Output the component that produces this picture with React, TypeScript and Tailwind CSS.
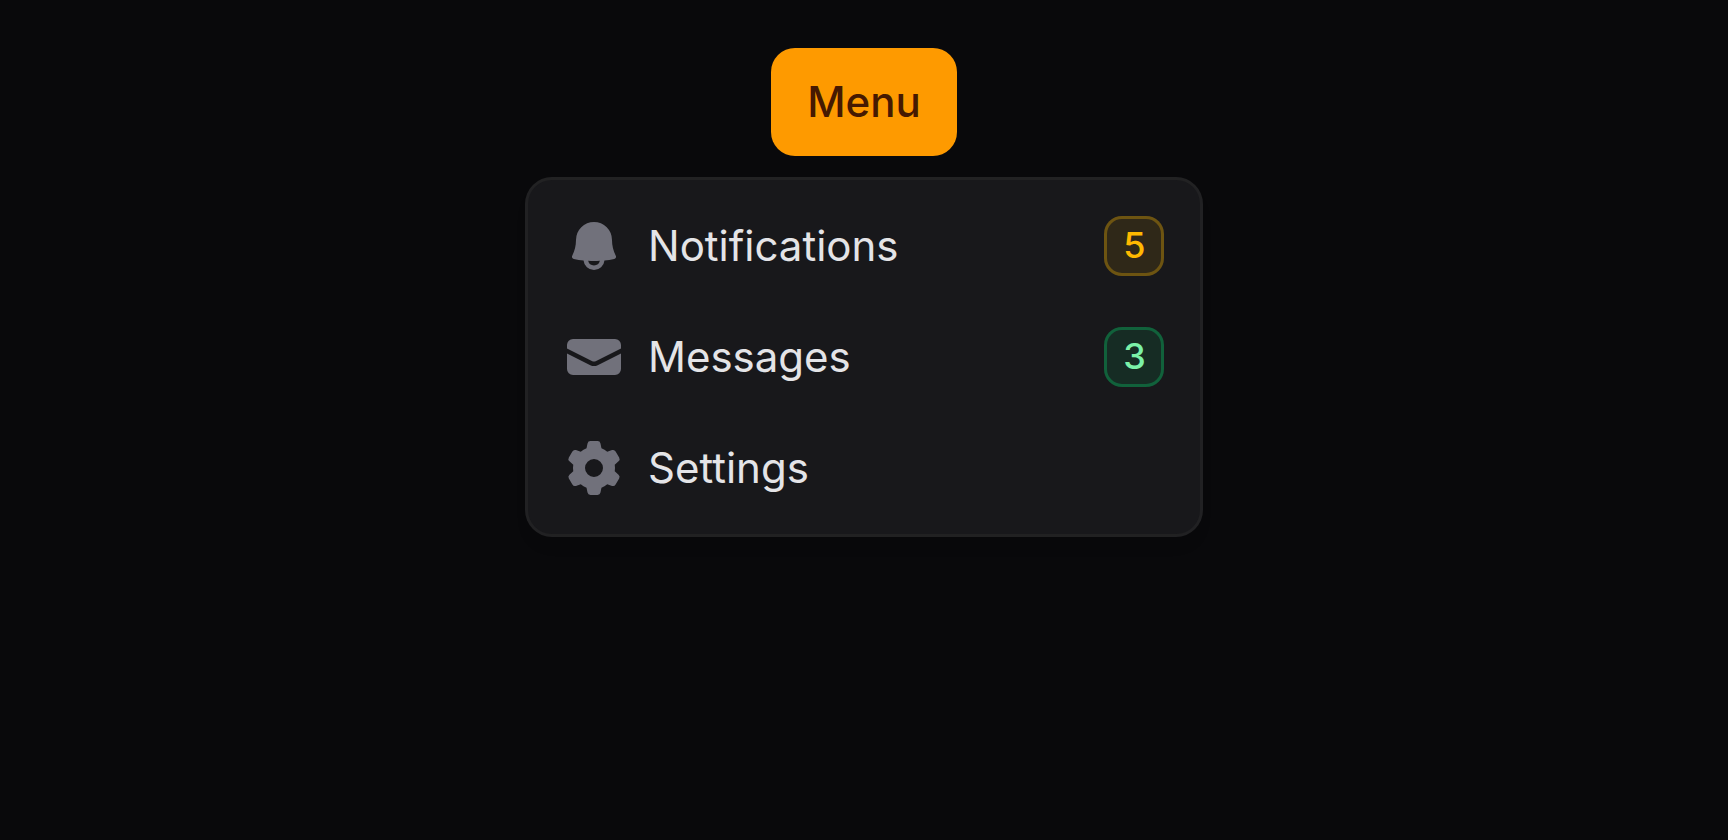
import clsx from "clsx"
import type { IconType } from "react-icons"
import { HiMiniBell, HiMiniCog6Tooth, HiMiniEnvelope } from "react-icons/hi2"

type Item = {
  label: string
  icon: IconType
  badge?: string
  color?: "warning" | "success"
}

const items: Item[] = [
  { label: "Notifications", icon: HiMiniBell, badge: "5", color: "warning" },
  { label: "Messages", icon: HiMiniEnvelope, badge: "3", color: "success" },
  { label: "Settings", icon: HiMiniCog6Tooth },
]

function DropdownItem({ label, icon: Icon, badge, color }: Item) {
  return (
    <button
      type="button"
      className="flex w-full items-center gap-6 rounded-2xl p-6 text-left hover:bg-white/5"
    >
      <Icon className="size-[60px] shrink-0 text-zinc-500" />
      <span className="flex-1 truncate text-[42px] leading-[60px] text-zinc-200">
        {label}
      </span>
      {badge && (
        <span
          className={clsx(
            "flex h-[60px] min-w-[60px] items-center justify-center rounded-[18px] pb-0.5 pl-px text-4xl font-medium inset-ring-3",
            color === "warning"
              ? "bg-amber-400/10 text-amber-400 inset-ring-amber-400/30"
              : "bg-green-400/10 text-green-300 inset-ring-green-400/30"
          )}
        >
          {badge}
        </span>
      )}
    </button>
  )
}

export default function App() {
  return (
    <div className="flex h-screen flex-col items-center gap-6 bg-zinc-950 pt-12 font-['Inter',sans-serif]">
      <button
        type="button"
        className="h-[108px] rounded-3xl bg-amber-500 px-9 text-[42px] leading-[60px] font-medium text-amber-950 hover:bg-amber-400"
      >
        Menu
      </button>

      <div className="flex w-2xl flex-col gap-[3px] rounded-3xl bg-zinc-900 p-3 shadow-[0_12px_18px_-6px_rgb(0_0_0/0.15)] ring-3 ring-white/10">
        {items.map((item) => (
          <DropdownItem key={item.label} {...item} />
        ))}
      </div>
    </div>
  )
}
